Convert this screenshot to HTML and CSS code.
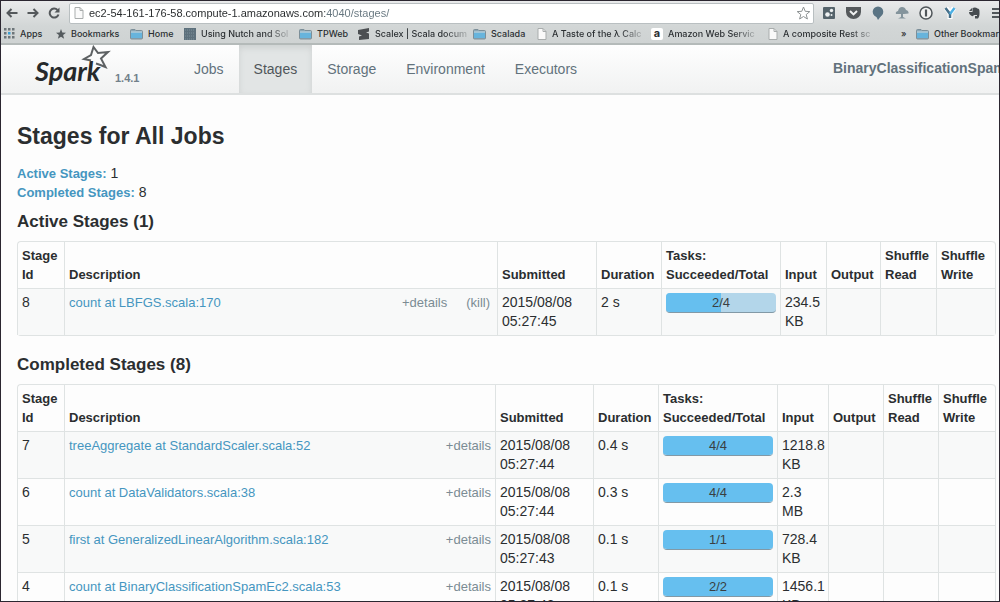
FILE: index.html
```html
<!DOCTYPE html>
<html lang="en">
<head>
<meta charset="utf-8">
<title>Stages for All Jobs</title>
<link rel="stylesheet" href="styles.css">
</head>
<body>
<svg class="defs" aria-hidden="true">
  <symbol id="folder" viewBox="0 0 13 12"><path d="M.5 2.500q0-1 1-1H5l1 1h5.500q1 0 1 1v6.500q0 1-1 1h-10q-1 0-1-1z" fill="#8aa5b3" stroke="#7c8f99"/><path d="M1 4.500h11v5.500H1z" fill="#67b4dc"/><path d="M1 4h11" stroke="#c5dde8"/></symbol>
  <symbol id="page" viewBox="0 0 10 12"><path d="M1 .5h5l3 3v8H1z" fill="#fafafa" stroke="#a9adad"/><path d="M6 .5v3h3" fill="none" stroke="#a9adad"/></symbol>
</svg>
<div class="window">
  <header class="browser">
    <div class="toolbar">
      <div class="history">
        <button type="button" aria-label="Back"><svg width="12" height="10" viewBox="0 0 12 10"><path d="M11.500 5H2M5.500 1L1.500 5l4 4" /></svg></button>
        <button type="button" aria-label="Forward"><svg width="12" height="10" viewBox="0 0 12 10"><path d="M.5 5H10M6.500 1l4 4-4 4" /></svg></button>
        <button type="button" aria-label="Reload"><svg width="12" height="12" viewBox="0 0 12 12"><path d="M9.500 3A4.500 4.500 0 1 0 10.500 7.500"/><path d="M11.500.5v5h-5z" class="solid"/></svg></button>
      </div>
      <div class="address">
        <svg width="10" height="12"><use href="#page"/></svg>
        <input class="url" type="text" aria-label="Address" value="ec2-54-161-176-58.compute-1.amazonaws.com:4040/stages/">
        <button type="button" aria-label="Bookmark this page"><svg width="15" height="14" viewBox="0 0 15 14"><path d="M7.500 1l1.700 4.300 4.600.3-3.600 2.900 1.200 4.500-3.900-2.500L3.600 13l1.200-4.500L1.200 5.600l4.600-.3z" fill="#fff" stroke="#8d9293"/></svg></button>
      </div>
      <div class="extensions">
        <button type="button" aria-label="Capture"><svg width="14" height="14" viewBox="0 0 14 14"><rect x="1" y="1" width="12" height="12" rx="1" fill="#55636b"/><circle cx="9.500" cy="4.500" r="1.700" fill="#eef1f2"/><circle cx="5.500" cy="8.500" r="2.300" fill="#eef1f2"/><circle cx="9.500" cy="9" r="1" fill="#eef1f2"/></svg></button>
        <button type="button" aria-label="Pocket"><svg width="15" height="14" viewBox="0 0 15 14"><path d="M0 1h15v5a7.500 7 0 0 1-15 0z" fill="#55595c"/><path d="M4 5l3.500 3.400L11 5" fill="none" stroke="#f1f2f2" stroke-width="2"/></svg></button>
        <button type="button" aria-label="Chat"><svg width="14" height="14" viewBox="0 0 14 14"><circle cx="7" cy="5.800" r="5.300" fill="#5a7484"/><path d="M5 10h5l-3 4z" fill="#5a7484"/></svg></button>
        <button type="button" aria-label="Tree"><svg width="14" height="14" viewBox="0 0 14 14"><path d="M1 8q-1-2 2-3 1-4 4-4t4 3q3 1 2.500 3.500L9 8z" fill="#84949c"/><path d="M6 7h2v4l3 1.500H3L6 11z" fill="#84949c"/></svg></button>
        <button type="button" aria-label="Password manager"><svg width="14" height="14" viewBox="0 0 14 14"><circle cx="7" cy="7" r="6" fill="#f1f2f2" stroke="#50565a" stroke-width="1.500"/><path d="M7 3.500v7" stroke="#50565a" stroke-width="2.200"/></svg></button>
        <button type="button" aria-label="Vector"><svg width="14" height="14" viewBox="0 0 14 14"><path d="M3 2l4 5v6" fill="none" stroke="#fff" stroke-width="5"/><path d="M11 2L7 7" stroke="#fff" stroke-width="5"/><path d="M2.500 2L7 8v4" fill="none" stroke="#46708a" stroke-width="2.500"/><path d="M11.500 2L7 8" stroke="#4cb0e4" stroke-width="2.500"/></svg></button>
        <button type="button" aria-label="Notes"><svg width="14" height="14" viewBox="0 0 14 14"><path d="M2 5l3-3v2.500L4.500 5zM5.500 2q3-1 5 .5 2 0 2 3 .3 5-1.500 7H8V10h2V9H7q-1 2-3 .5Q2 9 2 6h3.500z" fill="#464c50"/></svg></button>
        <button type="button" aria-label="Menu"><svg width="14" height="14" viewBox="0 0 14 14"><path d="M1 3h12M1 7h12M1 11h12" stroke="#50565a" stroke-width="2"/></svg></button>
      </div>
    </div>
    <nav class="bookmarks" aria-label="Bookmarks">
      <a href="#" class="apps"><svg width="11" height="11" viewBox="0 0 11 11" fill="#6d7579"><path d="M0 0h2.500v2.500H0zM4 0h2.500v2.500H4zM8 0h2.500v2.500H8zM0 4h2.500v2.500H0zM8 4h2.500v2.500H8zM0 8h2.500v2.500H0zM4 8h2.500v2.500H4zM8 8h2.500v2.500H8z"/><path d="M4 4h2.500v2.500H4z" fill="#3c9fd2"/></svg><span>Apps</span></a>
      <a href="#" class="starred"><svg width="10" height="10" viewBox="0 0 10 10"><path d="M5 0l1.300 3.500 3.700.2-2.900 2.300 1 3.800L5 7.700 1.900 9.800l1-3.800L0 3.700l3.700-.2z" fill="#555b5e"/></svg><span>Bookmarks</span></a>
      <a href="#" class="home"><svg width="13" height="12"><use href="#folder"/></svg><span>Home</span></a>
      <a href="#" class="nutch"><svg width="12" height="12" viewBox="0 0 12 12"><path d="M0 0h12v12H0z" fill="#5d707c"/><path d="M1 2h10M1 5h10M1 8h10M1 11h10" stroke="#7f919b" stroke-dasharray="1 1"/></svg><span class="fade">Using Nutch and Sol</span></a>
      <a href="#" class="tpweb"><svg width="13" height="12"><use href="#folder"/></svg><span>TPWeb</span></a>
      <a href="#" class="scalex"><svg width="13" height="12" viewBox="0 0 13 12"><path d="M1 2l11-2v3.500L9 4.500l3 1V11L2 12V8.500l3-1L1 6z" fill="#4c4f52"/></svg><span class="fade">Scalex | Scala docum</span></a>
      <a href="#" class="scalada"><svg width="13" height="12"><use href="#folder"/></svg><span>Scalada</span></a>
      <a href="#" class="taste"><svg width="10" height="12"><use href="#page"/></svg><span class="fade">A Taste of the λ Calc</span></a>
      <a href="#" class="amazon"><b class="a-mark">a</b><span class="fade">Amazon Web Servic</span></a>
      <a href="#" class="rest"><svg width="10" height="12"><use href="#page"/></svg><span class="fade">A composite Rest sc</span></a>
      <button type="button" class="more" aria-label="More bookmarks">»</button>
      <a href="#" class="other"><svg width="13" height="12"><use href="#folder"/></svg><span>Other Bookmarks</span></a>
    </nav>
  </header>
  <nav class="navbar" aria-label="Spark">
    <a href="#" class="brand"><span class="logo">Spark<svg class="star" width="30" height="26" viewBox="0 0 30 26"><path d="M10 15.500L3 14l7-4 2.500-8 4.500 6 10-1-7 6.500 4.500 8.500-6.500-2.500-3-1" /></svg></span><span class="version">1.4.1</span></a>
    <ul class="tabs">
      <li><a href="#">Jobs</a></li>
      <li><a href="#" class="active" aria-current="page">Stages</a></li>
      <li><a href="#">Storage</a></li>
      <li><a href="#">Environment</a></li>
      <li><a href="#">Executors</a></li>
    </ul>
    <strong class="app-name">BinaryClassificationSpam</strong>
  </nav>
  <main>
    <h1>Stages for All Jobs</h1>
    <ul class="summary">
      <li><a href="#active">Active Stages:</a> 1</li>
      <li><a href="#completed">Completed Stages:</a> 8</li>
    </ul>
    <h2 id="active">Active Stages (1)</h2>
    <table class="stages running">
      <colgroup><col class="c-id"><col><col class="c-submitted"><col class="c-duration"><col class="c-tasks"><col class="c-input"><col class="c-output"><col class="c-read"><col class="c-write"></colgroup>
      <thead><tr><th>Stage Id</th><th>Description</th><th>Submitted</th><th>Duration</th><th>Tasks: Succeeded/Total</th><th>Input</th><th>Output</th><th>Shuffle Read</th><th>Shuffle Write</th></tr></thead>
      <tbody>
        <tr><td>8</td><td><div class="desc"><a href="#">count at LBFGS.scala:170</a><button type="button">+details</button><a href="#" class="kill">(kill)</a></div></td><td>2015/08/08 05:27:45</td><td>2 s</td><td><div class="progress"><div class="bar" style="width:50%"></div><span>2/4</span></div></td><td>234.5 KB</td><td></td><td></td><td></td></tr>
      </tbody>
    </table>
    <h2 id="completed">Completed Stages (8)</h2>
    <table class="stages">
      <colgroup><col class="c-id"><col><col class="c-submitted"><col class="c-duration"><col class="c-tasks"><col class="c-input"><col class="c-output"><col class="c-read"><col class="c-write"></colgroup>
      <thead><tr><th>Stage Id</th><th>Description</th><th>Submitted</th><th>Duration</th><th>Tasks: Succeeded/Total</th><th>Input</th><th>Output</th><th>Shuffle Read</th><th>Shuffle Write</th></tr></thead>
      <tbody>
        <tr><td>7</td><td><div class="desc"><a href="#">treeAggregate at StandardScaler.scala:52</a><button type="button">+details</button></div></td><td>2015/08/08 05:27:44</td><td>0.4 s</td><td><div class="progress"><div class="bar" style="width:100%"></div><span>4/4</span></div></td><td>1218.8 KB</td><td></td><td></td><td></td></tr>
        <tr><td>6</td><td><div class="desc"><a href="#">count at DataValidators.scala:38</a><button type="button">+details</button></div></td><td>2015/08/08 05:27:44</td><td>0.3 s</td><td><div class="progress"><div class="bar" style="width:100%"></div><span>4/4</span></div></td><td>2.3<br>MB</td><td></td><td></td><td></td></tr>
        <tr><td>5</td><td><div class="desc"><a href="#">first at GeneralizedLinearAlgorithm.scala:182</a><button type="button">+details</button></div></td><td>2015/08/08 05:27:43</td><td>0.1 s</td><td><div class="progress"><div class="bar" style="width:100%"></div><span>1/1</span></div></td><td>728.4 KB</td><td></td><td></td><td></td></tr>
        <tr><td>4</td><td><div class="desc"><a href="#">count at BinaryClassificationSpamEc2.scala:53</a><button type="button">+details</button></div></td><td>2015/08/08 05:27:43</td><td>0.1 s</td><td><div class="progress"><div class="bar" style="width:100%"></div><span>2/2</span></div></td><td>1456.1 KB</td><td></td><td></td><td></td></tr>
      </tbody>
    </table>
  </main>
</div>
</body>
</html>
```
FILE: styles.css
```css
* { box-sizing: border-box; }
body {
  margin: 0;
  font: 14px/19px "Liberation Sans", Arial, sans-serif;
  color: #2b2e30;
  background: #fdfdfd;
}
button { border: 0; padding: 0; background: none; font: inherit; color: inherit; cursor: pointer; }
a { text-decoration: none; color: #4596c0; }
ul { list-style: none; margin: 0; padding: 0; }
.defs { display: none; }
.window { height: 100vh; overflow: hidden; border: 1px solid #2b2630; }

/* Browser chrome */
.browser {
  background: linear-gradient(#e9eaeb, #d2d6d6 60%, #cfd3d3);
  border-bottom: 2px solid #b4bab9;
}
.toolbar { display: flex; align-items: center; height: 23px; padding-left: 5px; overflow: hidden; }
.history { display: flex; align-items: center; gap: 9px; width: 63px; flex: none; }
.history button { display: flex; }
.history svg { fill: none; stroke: #54585b; stroke-width: 2; }
.history .solid { fill: #54585b; stroke: none; }
.address {
  flex: 1; display: flex; align-items: center; gap: 5px; height: 21px; margin-top: 1px;
  padding: 0 2px 0 4px; background: #fff; border: 1px solid #b9bfc1; border-radius: 2px;
}
.address svg { display: block; }
.url {
  flex: 1; min-width: 0; border: 0; padding: 0; outline: 0;
  font: 11px/18px "Liberation Sans", Arial, sans-serif;
  color: transparent;
  background: linear-gradient(90deg, #26292b 236px, #64747d 236px);
  background-clip: text; -webkit-background-clip: text;
}
.extensions { display: flex; gap: 10px; width: 185px; padding-left: 8px; overflow: hidden; flex: none; }
.extensions button { display: flex; flex: none; }
.bookmarks { display: flex; align-items: center; height: 19px; padding-left: 3px; font: 500 9px/12px Inter, sans-serif; overflow: hidden; }
.bookmarks a { display: flex; align-items: center; gap: 5px; color: #2b2f32; white-space: nowrap; flex: none; }
.bookmarks .fade { mask-image: linear-gradient(90deg, #000 75%, #0003); }
.apps { width: 52px; }
.starred { width: 74px; }
.home { width: 54px; }
.nutch { width: 115px; }
.tpweb { width: 58px; }
.scalex { width: 116px; }
.scalada { width: 64px; }
.taste { width: 114px; }
.amazon { width: 117px; }
.rest { width: 133px; }
.more { width: 15px; text-align: left; flex: none; }
.a-mark { width: 12px; height: 12px; border-radius: 2px; background: #fff; text-align: center; font-size: 11px; line-height: 11px; }

/* Spark navigation */
.navbar {
  display: flex; height: 50px; padding-left: 34px; overflow: hidden;
  background: linear-gradient(#fefefe, #f1f2f2); border-bottom: 2px solid #dde0e0;
}
.brand { display: flex; align-items: flex-end; width: 144px; padding-bottom: 7px; flex: none; }
.logo { position: relative; width: 80px; font: italic 700 27px/30px Lato, sans-serif; color: #26292b; }
.star { position: absolute; left: 46px; top: -11px; fill: none; stroke: #5d6163; stroke-width: 2; }
.version { font-size: 11px; font-weight: 700; line-height: 16px; color: #71808a; }
.tabs { display: flex; }
.tabs a { display: block; height: 48px; padding: 15px 15px 0; color: #62727c; }
.tabs .active { color: #50565a; background: #e2e5e5; box-shadow: inset 0 3px 6px #cdd1d1; }
.app-name { margin-left: auto; width: 166px; padding-top: 14px; white-space: nowrap; color: #62727c; }

/* Page */
main { padding: 28px 3px 0 16px; }
h1 { margin: 0 0 15px; font-size: 23px; line-height: 26px; }
.summary a { font-size: 13px; font-weight: 700; }
.summary { margin-bottom: 10px; }
h2 { margin: 0 0 9px; font-size: 17px; line-height: 20px; }
.stages {
  width: 100%; table-layout: fixed; border-collapse: separate; border-spacing: 0;
  border: solid #dfe3e3; border-width: 0 1px 1px 0; border-radius: 4px; margin-bottom: 19px;
}
.stages th, .stages td { padding: 4px; border: solid #dfe3e3; border-width: 1px 0 0 1px; text-align: left; vertical-align: top; }
.stages th { font-size: 13px; vertical-align: bottom; }
.stages th:first-child { border-top-left-radius: 4px; }
.stages th:last-child { border-top-right-radius: 4px; }
.stages tbody tr:nth-child(odd) { background: #f8f9f9; }
.c-id { width: 47px; }
.c-submitted { width: 98px; }
.c-duration { width: 65px; }
.c-tasks { width: 119px; }
.c-input { width: 51px; }
.c-output { width: 55px; }
.c-read { width: 55px; }
.c-write { width: 57px; }
.running .c-submitted { width: 99px; }
.running .c-input { width: 46px; }
.running .c-output { width: 54px; }
.running .c-read { width: 56px; }
.running .c-write { width: 59px; }
.desc { display: flex; font-size: 13px; }
.desc button { margin-left: auto; color: #7b8c94; }
.desc .kill { margin-left: 19px; padding-right: 3px; color: #7b8c94; }
.progress { display: grid; height: 20px; border-radius: 4px; background: #b3d6ea; overflow: hidden; border-bottom: 1px solid #8299a6; }
.progress > * { grid-area: 1 / 1; }
.progress span { text-align: center; font-size: 13px; color: #3a3f42; }
.bar { height: 20px; background: #66bfef; }
```
